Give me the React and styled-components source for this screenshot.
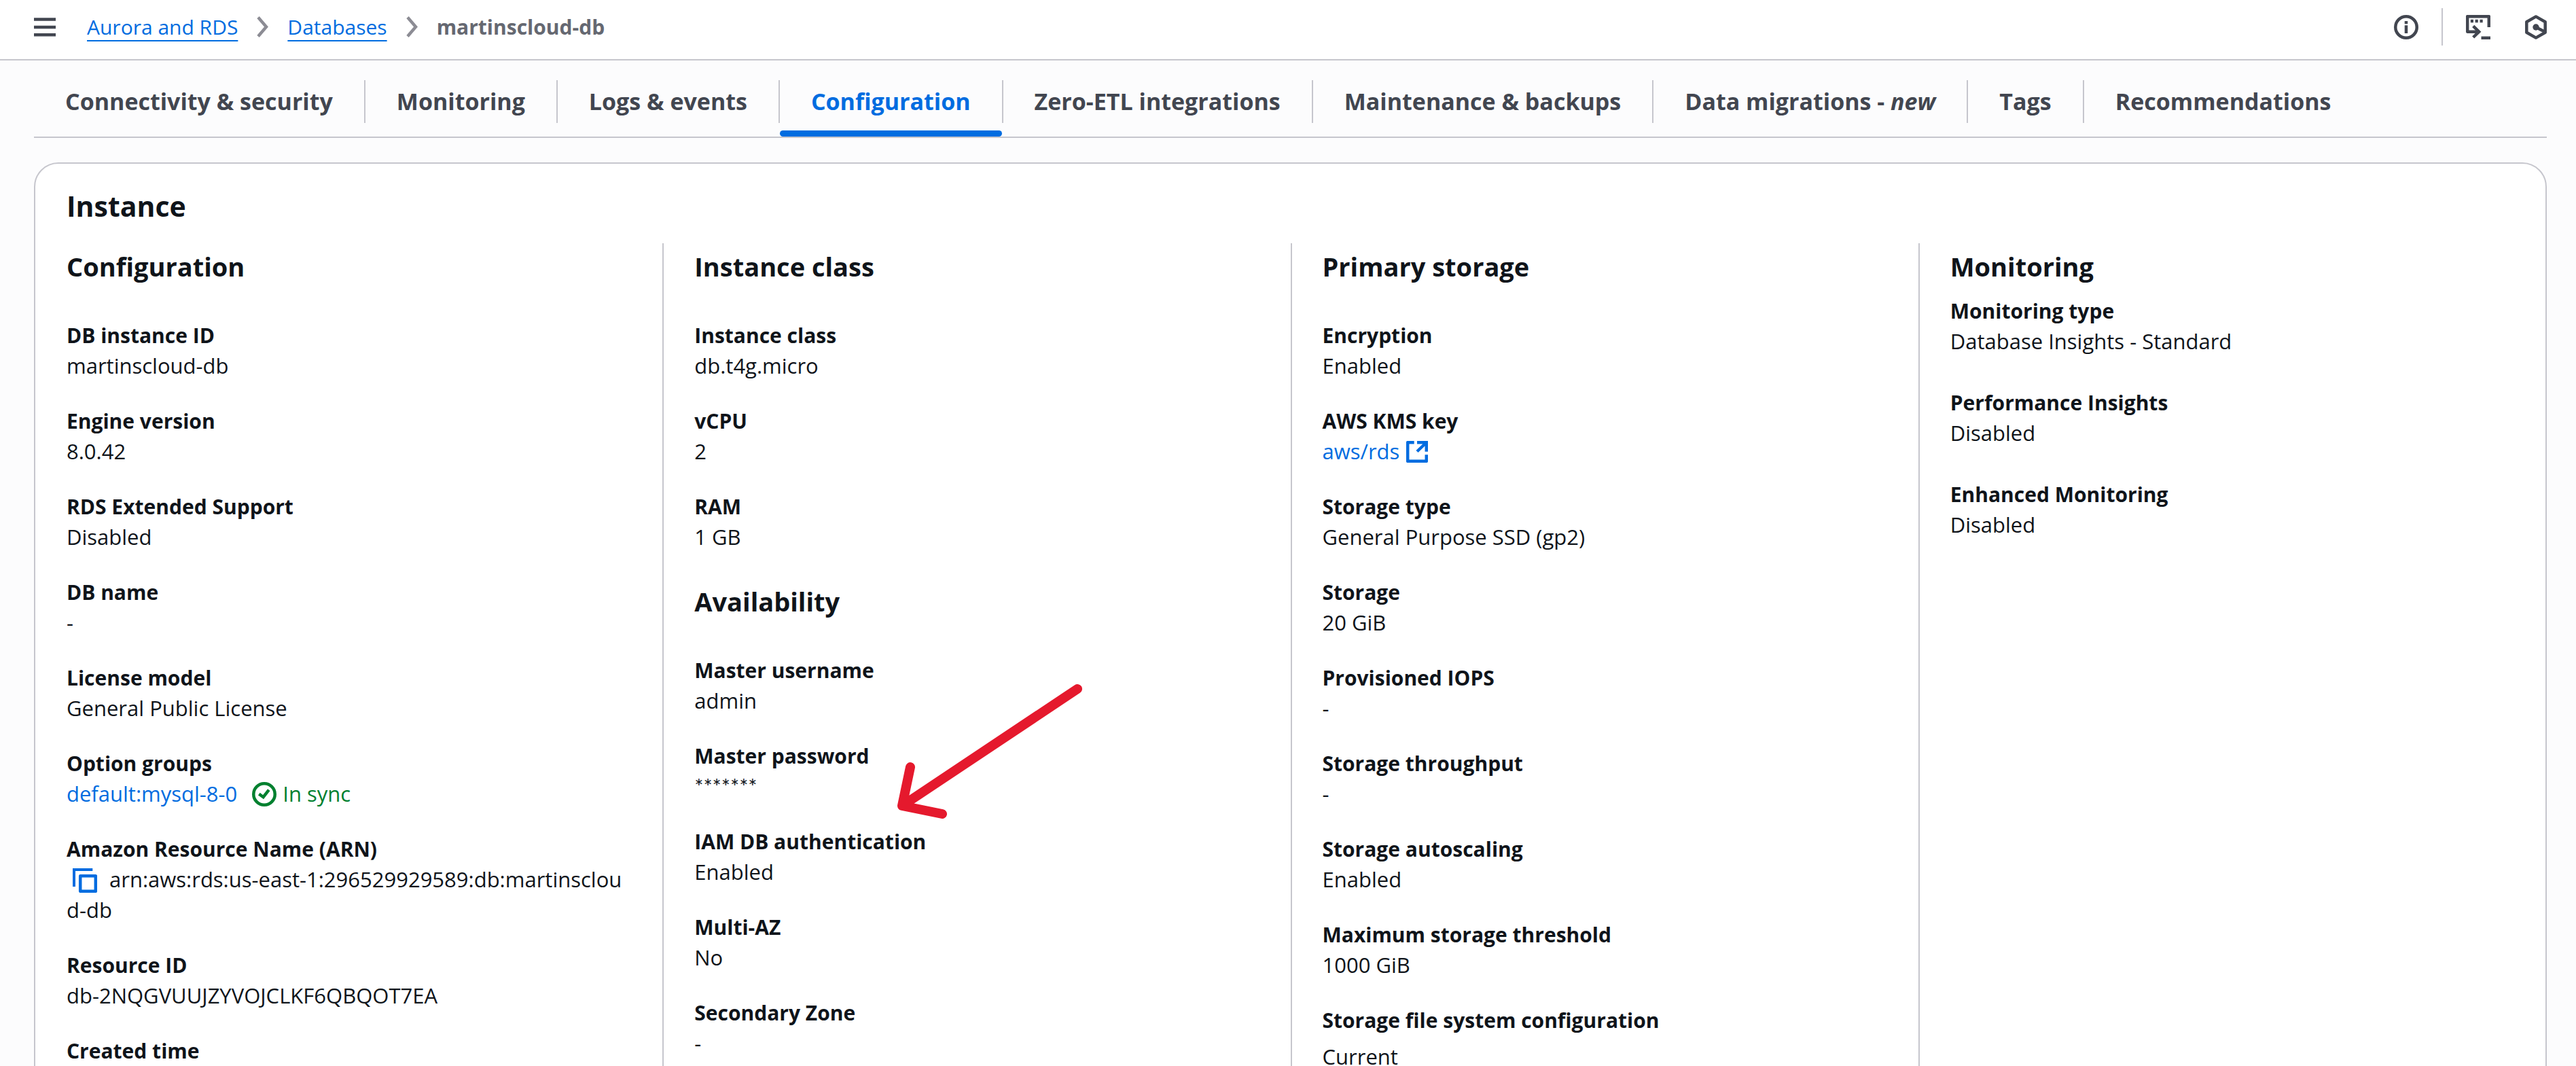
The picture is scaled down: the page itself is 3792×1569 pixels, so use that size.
import React, { useState } from "react";
import styled, { createGlobalStyle, css } from "styled-components";

const color = {
  text: "#0f141a",
  muted: "#424650",
  crumb: "#656871",
  chevron: "#8c8c94",
  line: "#c6c6cd",
  link: "#006ce0",
  success: "#00802f",
  marker: "#e5192d",
  page: "#fcfcfd",
  surface: "#ffffff",
};

const GlobalStyle = createGlobalStyle`
  *, *::before, *::after { box-sizing: border-box; }
  body {
    margin: 0;
    color: ${color.text};
    background: ${color.page};
    font-family: "Open Sans", "Noto Sans", sans-serif;
    font-size: 31px;
    line-height: 45px;
  }
`;

const Page = styled.div`
  position: relative;
  display: flex;
  flex-direction: column;
  height: 100vh;
  overflow: hidden;
`;

const Header = styled.header`
  display: flex;
  flex: none;
  align-items: center;
  justify-content: space-between;
  padding: 17px 43px 25px 50px;
  border-bottom: 2px solid ${color.line};
  background: ${color.surface};
`;

const IconButton = styled.button`
  display: flex;
  padding: 0;
  border: 0;
  background: none;
  color: ${(p) => (p.$link ? color.link : color.muted)};
  cursor: pointer;
`;

const HeaderStart = styled.div`
  display: flex;
  align-items: center;
  gap: 46px;
`;

const HeaderEnd = styled.div`
  display: flex;
  align-items: center;
  gap: 34px;
`;

const ToolGroup = styled.div`
  display: flex;
  align-items: center;
  gap: 51px;
`;

const HeaderRule = styled.span`
  width: 2px;
  height: 55px;
  margin: -5px 0;
  background: ${color.line};
`;

const CrumbList = styled.ol`
  display: flex;
  align-items: center;
  gap: 28px;
  margin: 0;
  padding: 0;
  list-style: none;
  font-size: 30px;
`;

const Crumb = styled.li`
  display: flex;
  align-items: center;
  gap: 28px;
  color: ${color.chevron};
`;

const CrumbLink = styled.a`
  color: ${color.link};
  text-decoration: underline;
  text-decoration-thickness: 2px;
  text-underline-offset: 8px;
  text-decoration-skip-ink: none;
`;

const CrumbCurrent = styled.span`
  color: ${color.crumb};
  font-weight: 700;
`;

const Main = styled.main`
  display: flex;
  flex: 1;
  flex-direction: column;
  gap: 36px;
  min-height: 0;
  padding: 9px 43px 0 50px;
`;

const TabList = styled.div`
  display: flex;
  flex: none;
  align-items: center;
  border-bottom: 2px solid ${color.line};
`;

const TabRule = styled.span`
  width: 2px;
  height: 63px;
  background: ${color.line};
`;

const Tab = styled.button`
  position: relative;
  height: 103px;
  padding: 0 46px;
  border: 0;
  background: none;
  color: ${(p) => (p.$active ? color.link : color.muted)};
  font: inherit;
  font-size: 34px;
  font-weight: 700;
  white-space: nowrap;
  cursor: pointer;

  ${(p) =>
    p.$active &&
    css`
      &::after {
        content: "";
        position: absolute;
        right: 0;
        bottom: 0;
        left: 0;
        height: 9px;
        border-radius: 5px;
        background: ${color.link};
      }
    `}
`;

const Card = styled.section`
  flex: none;
  padding: 35px 44px 45px 46px;
  border: 2px solid ${color.line};
  border-radius: 36px;
  background: ${color.surface};
`;

const CardTitle = styled.h2`
  margin: 0 0 28px;
  font-size: 41px;
  line-height: 54px;
`;

const Columns = styled.div`
  display: flex;
  gap: 45px;
`;

const ColumnRule = styled.span`
  flex: none;
  width: 2px;
  background: ${color.line};
`;

const Column = styled.div`
  display: flex;
  flex: 1 1 0;
  flex-direction: column;
  gap: 50px;
  min-width: 0;
  padding-top: 12px;
`;

const Group = styled.section`
  display: flex;
  flex-direction: column;
  gap: ${(p) => (p.$compact ? 20 : 56)}px;
`;

const GroupTitle = styled.h3`
  margin: 0;
  font-size: 38px;
  line-height: 45px;
`;

const Fields = styled.dl`
  display: flex;
  flex-direction: column;
  gap: ${(p) => (p.$loose ? 45 : 36)}px;
  margin: 0;
`;

const Label = styled.dt`
  font-size: 30px;
  font-weight: 700;
`;

const Value = styled.dd`
  margin: ${(p) => (p.$spaced ? 9 : 0)}px 0 0;
  word-break: break-all;
`;

const ValueRow = styled.span`
  display: flex;
  align-items: center;
  gap: ${(p) => (p.$tight ? 10 : 22)}px;
`;

const Link = styled.a`
  color: ${color.link};
  text-decoration: none;
`;

const Status = styled.span`
  display: flex;
  align-items: center;
  gap: 9px;
  color: ${color.success};
`;

const Masked = styled.span`
  font-family: Lato, "Open Sans", sans-serif;
`;

const CopyButton = styled(IconButton)`
  display: inline-flex;
  margin: 0 18px 0 9px;
  vertical-align: -8px;
`;

const Annotation = styled.svg`
  position: absolute;
  top: 1000px;
  left: 1314px;
  pointer-events: none;
`;

const Svg = ({ w = 36, h = 36, sw = 4.5, children }) => (
  <svg
    width={w}
    height={h}
    viewBox={`0 0 ${w} ${h}`}
    fill="none"
    stroke="currentColor"
    strokeWidth={sw}
    aria-hidden="true"
  >
    {children}
  </svg>
);

const MenuIcon = () => (
  <Svg w={32} h={28}>
    <path d="M0 2.5h32M0 14h32M0 25.3h32" />
  </Svg>
);

const ChevronIcon = () => (
  <Svg w={17} h={31}>
    <path d="M2 1.5 14 15.5 2 29.5" />
  </Svg>
);

const InfoIcon = () => (
  <Svg>
    <circle cx="18" cy="18" r="15.75" />
    <path d="M18 9v4.3M18 15.3V27" />
  </Svg>
);

const ShellIcon = () => (
  <Svg>
    <path d="M33.8 18V2.2H2.2v22.5h17.5" strokeLinejoin="round" />
    <path d="m10.7 16.4 8.5 8.3-8.5 8.3" />
    <path d="M22.5 33.8H36" />
    <path d="M6.8 9H11M13.6 9h4.2M20.5 9h4.2" />
  </Svg>
);

const HexIcon = () => (
  <Svg w={32} h={36}>
    <path
      d="M16 2.4 29.7 10.2v15.6L16 33.6 2.3 25.8V10.2z"
      strokeLinejoin="round"
    />
    <circle cx="16" cy="18" r="4.7" fill="currentColor" stroke="none" />
    <path d="m16 18 13 6.8" />
  </Svg>
);

const CheckIcon = () => (
  <Svg>
    <circle cx="18" cy="18" r="15.75" />
    <path d="m10.3 17.6 6.3 4.6 8.2-10.6" />
  </Svg>
);

const CopyIcon = () => (
  <Svg>
    <path d="M2 27V2h27.3" strokeWidth="4" />
    <rect x="11.2" y="11.2" width="22.6" height="22.6" strokeLinejoin="round" />
  </Svg>
);

const ExternalIcon = () => (
  <Svg w={32} h={32} sw={4.5}>
    <path d="M11.7 2.2H2.2v27.6h27.6v-9.5" strokeLinejoin="round" />
    <path d="M16 2.2h13.8v13.5M16 15.5 29 3" />
  </Svg>
);

const tabs = [
  "Connectivity & security",
  "Monitoring",
  "Logs & events",
  "Configuration",
  "Zero-ETL integrations",
  "Maintenance & backups",
  "Data migrations",
  "Tags",
  "Recommendations",
];

const columns = [
  [
    {
      title: "Configuration",
      fields: [
        ["DB instance ID", "martinscloud-db"],
        ["Engine version", "8.0.42"],
        ["RDS Extended Support", "Disabled"],
        ["DB name", "-"],
        ["License model", "General Public License"],
        [
          "Option groups",
          <ValueRow>
            <Link href="#option-group">default:mysql-8-0</Link>
            <Status>
              <CheckIcon />
              In sync
            </Status>
          </ValueRow>,
        ],
        [
          "Amazon Resource Name (ARN)",
          <>
            <CopyButton type="button" $link aria-label="Copy ARN">
              <CopyIcon />
            </CopyButton>
            arn:aws:rds:us-east-1:296529929589:db:martinscloud-db
          </>,
        ],
        ["Resource ID", "db-2NQGVUUJZYVOJCLKF6QBQOT7EA"],
        ["Created time", null],
      ],
    },
  ],
  [
    {
      title: "Instance class",
      fields: [
        ["Instance class", "db.t4g.micro"],
        ["vCPU", "2"],
        ["RAM", "1 GB"],
      ],
    },
    {
      title: "Availability",
      fields: [
        ["Master username", "admin"],
        ["Master password", <Masked>*******</Masked>],
        ["IAM DB authentication", "Enabled"],
        ["Multi-AZ", "No"],
        ["Secondary Zone", "-"],
      ],
    },
  ],
  [
    {
      title: "Primary storage",
      fields: [
        ["Encryption", "Enabled"],
        [
          "AWS KMS key",
          <ValueRow $tight>
            <Link href="#kms">aws/rds</Link>
            <Link href="#kms" aria-label="Opens in a new tab">
              <ValueRow>
                <ExternalIcon />
              </ValueRow>
            </Link>
          </ValueRow>,
        ],
        ["Storage type", "General Purpose SSD (gp2)"],
        ["Storage", "20 GiB"],
        ["Provisioned IOPS", "-"],
        ["Storage throughput", "-"],
        ["Storage autoscaling", "Enabled"],
        ["Maximum storage threshold", "1000 GiB"],
        ["Storage file system configuration", "Current", true],
      ],
    },
  ],
  [
    {
      title: "Monitoring",
      compact: true,
      fields: [
        ["Monitoring type", "Database Insights - Standard"],
        ["Performance Insights", "Disabled"],
        ["Enhanced Monitoring", "Disabled"],
      ],
    },
  ],
];

export default function App() {
  const [active, setActive] = useState("Configuration");

  return (
    <Page>
      <GlobalStyle />
      <Header>
        <HeaderStart>
          <IconButton type="button" aria-label="Open navigation">
            <MenuIcon />
          </IconButton>
          <nav aria-label="Breadcrumbs">
            <CrumbList>
              <Crumb>
                <CrumbLink href="#rds">Aurora and RDS</CrumbLink>
                <ChevronIcon />
              </Crumb>
              <Crumb>
                <CrumbLink href="#databases">Databases</CrumbLink>
                <ChevronIcon />
              </Crumb>
              <Crumb>
                <CrumbCurrent aria-current="page">martinscloud-db</CrumbCurrent>
              </Crumb>
            </CrumbList>
          </nav>
        </HeaderStart>
        <HeaderEnd>
          <IconButton type="button" aria-label="Info">
            <InfoIcon />
          </IconButton>
          <HeaderRule />
          <ToolGroup>
            <IconButton type="button" aria-label="CloudShell">
              <ShellIcon />
            </IconButton>
            <IconButton type="button" aria-label="Assistant">
              <HexIcon />
            </IconButton>
          </ToolGroup>
        </HeaderEnd>
      </Header>

      <Main>
        <TabList role="tablist">
          {tabs.map((name, i) => (
            <React.Fragment key={name}>
              {i > 0 && <TabRule />}
              <Tab
                type="button"
                role="tab"
                aria-selected={name === active}
                $active={name === active}
                onClick={() => setActive(name)}
              >
                {name}
                {name === "Data migrations" && (
                  <>
                    {" - "}
                    <em>new</em>
                  </>
                )}
              </Tab>
            </React.Fragment>
          ))}
        </TabList>

        <Card>
          <CardTitle>Instance</CardTitle>
          <Columns>
            {columns.map((groups, i) => (
              <React.Fragment key={groups[0].title}>
                {i > 0 && <ColumnRule />}
                <Column>
                  {groups.map(({ title, compact, fields }) => (
                    <Group key={title} $compact={compact}>
                      <GroupTitle>{title}</GroupTitle>
                      <Fields $loose={compact}>
                        {fields.map(([label, value, spaced]) => (
                          <div key={label}>
                            <Label>{label}</Label>
                            {value && <Value $spaced={spaced}>{value}</Value>}
                          </div>
                        ))}
                      </Fields>
                    </Group>
                  ))}
                </Column>
              </React.Fragment>
            ))}
          </Columns>
        </Card>
      </Main>

      <Annotation
        width="290"
        height="212"
        viewBox="0 0 290 212"
        fill="none"
        stroke={color.marker}
        strokeWidth="14"
        strokeLinecap="round"
        strokeLinejoin="round"
        aria-hidden="true"
      >
        <path d="M272 14 14 186M26 129 14 186l59 12" />
      </Annotation>
    </Page>
  );
}
